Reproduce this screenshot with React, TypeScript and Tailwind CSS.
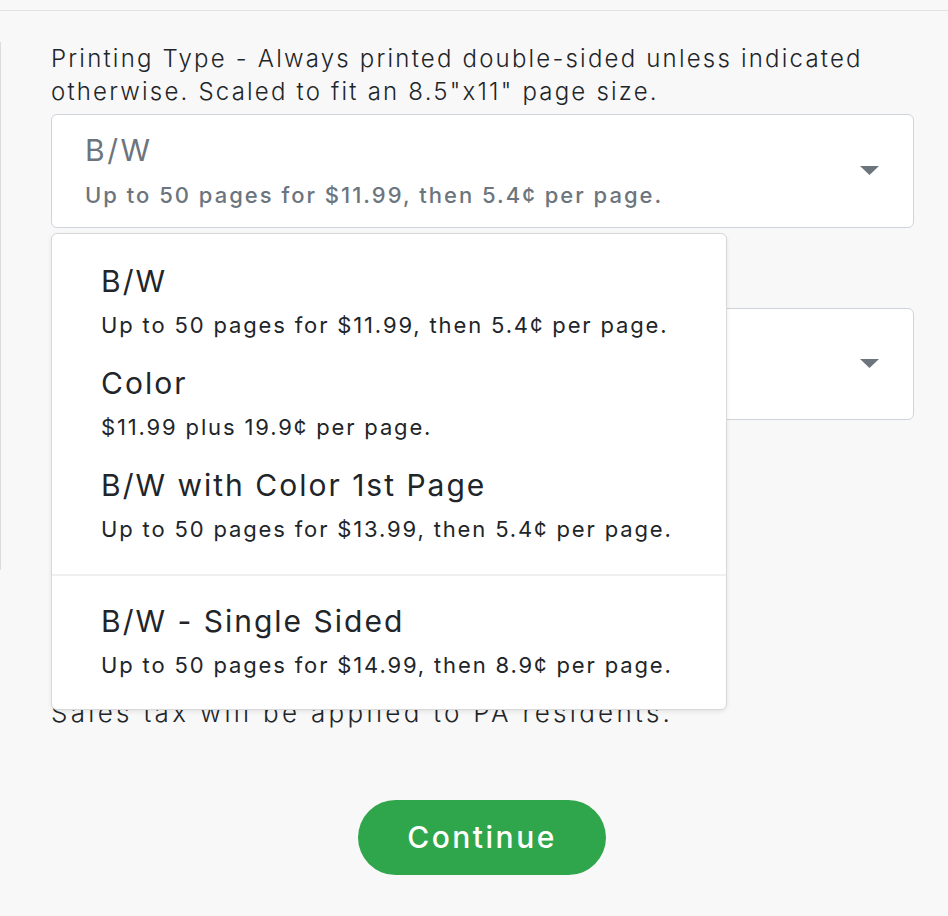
import React from "react";

const FONT = { fontFamily: "Inter, 'Noto Sans', sans-serif" };

function Caret() {
  return (
    <svg width="19" height="10" viewBox="0 0 19 10" className="shrink-0">
      <path d="M0 0 L19 0 L9.5 9 Z" fill="#6c757d" />
    </svg>
  );
}

const items = [
  { t: "B/W", s: "Up to 50 pages for $11.99, then 5.4¢ per page." },
  { t: "Color", s: "$11.99 plus 19.9¢ per page." },
  { t: "B/W with Color 1st Page", s: "Up to 50 pages for $13.99, then 5.4¢ per page." },
];

function Item({ t, s }: { t: string; s: string }) {
  return (
    <div className="px-[49px] pt-[15px] pb-[7px]">
      <div className="text-[30px] leading-[40px] text-[#212529] font-normal tracking-[2px]">{t}</div>
      <div className="mt-[8px] text-[22px] leading-[32px] text-[#212529] font-normal tracking-[1.85px]">{s}</div>
    </div>
  );
}

export default function App() {
  return (
    <div className="relative w-[948px] h-[916px] bg-[#f8f8f8] overflow-hidden" style={FONT}>
      <div className="h-[11px] border-b border-[#e3e3e3]" />
      <div className="mt-[31px] h-[528px] border-l border-[#dcdcdc] pl-[50px] pr-[34px]">
        <div className="text-[24px] leading-[33px] text-[#212529] font-light tracking-[2.2px]">
          Printing Type - Always printed double-sided unless indicated otherwise. Scaled to fit an 8.5"x11" page size.
        </div>
        <div className="mt-[6px] h-[114px] bg-white border border-[#ced4da] rounded-[6px] flex items-center pl-[33px] pr-[34px]">
          <div className="flex-1">
            <div className="text-[30px] leading-[40px] text-[#6c757d] font-normal tracking-[2.5px]">B/W</div>
            <div className="mt-[7px] text-[22px] leading-[36px] text-[#6c757d] font-medium tracking-[2px]">
              Up to 50 pages for $11.99, then 5.4¢ per page.
            </div>
          </div>
          <Caret />
        </div>
        <div className="mt-[80px] h-[112px] bg-white border border-[#ced4da] rounded-[6px] flex items-center justify-end pr-[34px]">
          <Caret />
        </div>
        <div className="mt-[85px] h-[66px] w-[640px] bg-white border border-[#ced4da] rounded-[6px]" />
      </div>
      <div className="mt-[125px] pl-[51px] text-[26px] leading-[36px] text-[#212529] font-light tracking-[3.3px]">
        Sales tax will be applied to PA residents.
      </div>
      <div className="mt-[69px] flex justify-center pl-[16px]">
        <button className="w-[248px] h-[75px] rounded-full bg-[#2fa64b] text-white text-[30px] font-medium tracking-[2.5px]">
          Continue
        </button>
      </div>

      <div className="absolute left-[51px] top-[233px] w-[676px] h-[477px] bg-white border border-[#d8d8d8] rounded-[6px] shadow-[0_2px_4px_rgba(0,0,0,0.08)] pt-[12px]">
        {items.map((it) => (
          <Item key={it.t} t={it.t} s={it.s} />
        ))}
        <div className="mt-[22px] mb-[10px] h-[2px] bg-[#f0f0f0]" />
        <Item t="B/W - Single Sided" s="Up to 50 pages for $14.99, then 8.9¢ per page." />
      </div>
    </div>
  );
}
